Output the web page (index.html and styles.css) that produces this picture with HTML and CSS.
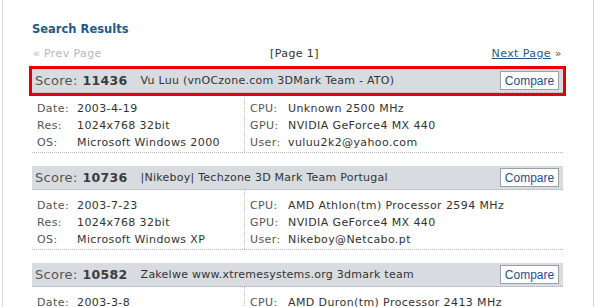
FILE: index.html
```html
<!DOCTYPE html>
<html lang="en">
<head>
  <meta charset="UTF-8" />
  <title>Search Results</title>
  <link rel="stylesheet" href="styles.css">
</head>
<body>

  <div class="page">
    <h2 class="title">Search Results</h2>

    <div class="pager">
      <span class="prev">&laquo; Prev Page</span>
      <span class="current">[Page 1]</span>
      <span class="next"><a href="#">Next Page</a> &raquo;</span>
    </div>

    <div class="result marked">
      <div class="head">
        <span class="score-label">Score:</span>
        <span class="score">11436</span>
        <span class="name">Vu Luu (vnOCzone.com 3DMark Team - ATO)</span>
        <button class="compare">Compare</button>
      </div>
      <div class="details">
        <div class="col">
          <div class="row"><span class="label">Date:</span>2003-4-19</div>
          <div class="row"><span class="label">Res:</span>1024x768 32bit</div>
          <div class="row"><span class="label">OS:</span>Microsoft Windows 2000</div>
        </div>
        <div class="col right">
          <div class="row"><span class="label">CPU:</span>Unknown 2500 MHz</div>
          <div class="row"><span class="label">GPU:</span>NVIDIA GeForce4 MX 440</div>
          <div class="row"><span class="label">User:</span>vuluu2k2@yahoo.com</div>
        </div>
      </div>
    </div>

    <div class="result">
      <div class="head">
        <span class="score-label">Score:</span>
        <span class="score">10736</span>
        <span class="name">|Nikeboy| Techzone 3D Mark Team Portugal</span>
        <button class="compare">Compare</button>
      </div>
      <div class="details">
        <div class="col">
          <div class="row"><span class="label">Date:</span>2003-7-23</div>
          <div class="row"><span class="label">Res:</span>1024x768 32bit</div>
          <div class="row"><span class="label">OS:</span>Microsoft Windows XP</div>
        </div>
        <div class="col right">
          <div class="row"><span class="label">CPU:</span>AMD Athlon(tm) Processor 2594 MHz</div>
          <div class="row"><span class="label">GPU:</span>NVIDIA GeForce4 MX 440</div>
          <div class="row"><span class="label">User:</span>Nikeboy@Netcabo.pt</div>
        </div>
      </div>
    </div>

    <div class="result">
      <div class="head">
        <span class="score-label">Score:</span>
        <span class="score">10582</span>
        <span class="name">Zakelwe www.xtremesystems.org 3dmark team</span>
        <button class="compare">Compare</button>
      </div>
      <div class="details">
        <div class="col">
          <div class="row"><span class="label">Date:</span>2003-3-8</div>
          <div class="row"><span class="label">Res:</span>1024x768 32bit</div>
          <div class="row"><span class="label">OS:</span>Microsoft Windows XP</div>
        </div>
        <div class="col right">
          <div class="row"><span class="label">CPU:</span>AMD Duron(tm) Processor 2413 MHz</div>
          <div class="row"><span class="label">GPU:</span>NVIDIA GeForce4 MX 440</div>
          <div class="row"><span class="label">User:</span>-</div>
        </div>
      </div>
    </div>
  </div>

</body>
</html>
```

FILE: styles.css
```css
* {
  box-sizing: border-box;
}

body {
  margin: 0;
  background: #fff;
  font-family: Verdana, "DejaVu Sans", sans-serif;
  font-size: 11px;
  letter-spacing: 0.4px;
  color: #333;
  overflow: hidden;
}

.page {
  margin-left: 2px;
  width: 592px;
  min-height: 307px;
  border-left: 1px solid #d6d6d6;
  border-right: 1px solid #d6d6d6;
  padding: 0 30px 0 29px;
}

.title {
  margin: 0;
  padding-top: 21px;
  font-size: 11.5px;
  line-height: 16px;
  font-weight: bold;
  letter-spacing: 0;
  color: #1f5a8c;
}

.pager {
  display: grid;
  grid-template-columns: 1fr auto 1fr;
  margin-top: 9px;
  line-height: 16px;
}

.prev {
  color: #b8b8b8;
  padding-left: 1px;
}

.current {
  color: #333;
  padding-right: 6px;
}

.next {
  text-align: right;
  color: #555;
  padding-right: 1px;
}

.next a {
  color: #1f5a8c;
}

.result {
  margin-top: 7px;
}

.result + .result {
  margin-top: 13px;
}

.head {
  display: flex;
  align-items: center;
  height: 24px;
  padding-left: 3px;
  background: #d8dce0;
  border-bottom: 1px dotted #aab0b6;
}

.marked .head {
  outline: 3px solid #e80000;
  outline-offset: 0;
}

.score-label {
  font-size: 13px;
  letter-spacing: 0.3px;
  color: #555;
}

.score {
  font-size: 12.5px;
  font-weight: bold;
  letter-spacing: 0.3px;
  color: #3c3c3c;
  margin-left: 5px;
}

.name {
  margin-left: 13px;
  letter-spacing: 0.25px;
  color: #333;
}

.compare {
  margin-left: auto;
  margin-right: 4px;
  height: 19px;
  width: 59px;
  padding: 0;
  background: #fff;
  border: 1px solid #9aa0a6;
  font-family: "Liberation Sans", Arial, sans-serif;
  font-size: 12px;
  letter-spacing: 0;
  color: #1f4e8c;
}

.details {
  display: grid;
  grid-template-columns: 212px 1fr;
  border-bottom: 1px dotted #bbb;
}

.col {
  padding: 7px 0 1px 5px;
}

.col.right {
  border-left: 1px dotted #bbb;
}

.row {
  line-height: 17px;
  white-space: nowrap;
}

.label {
  display: inline-block;
  width: 40px;
  color: #555;
}

.right .label {
  width: 38px;
}
```
